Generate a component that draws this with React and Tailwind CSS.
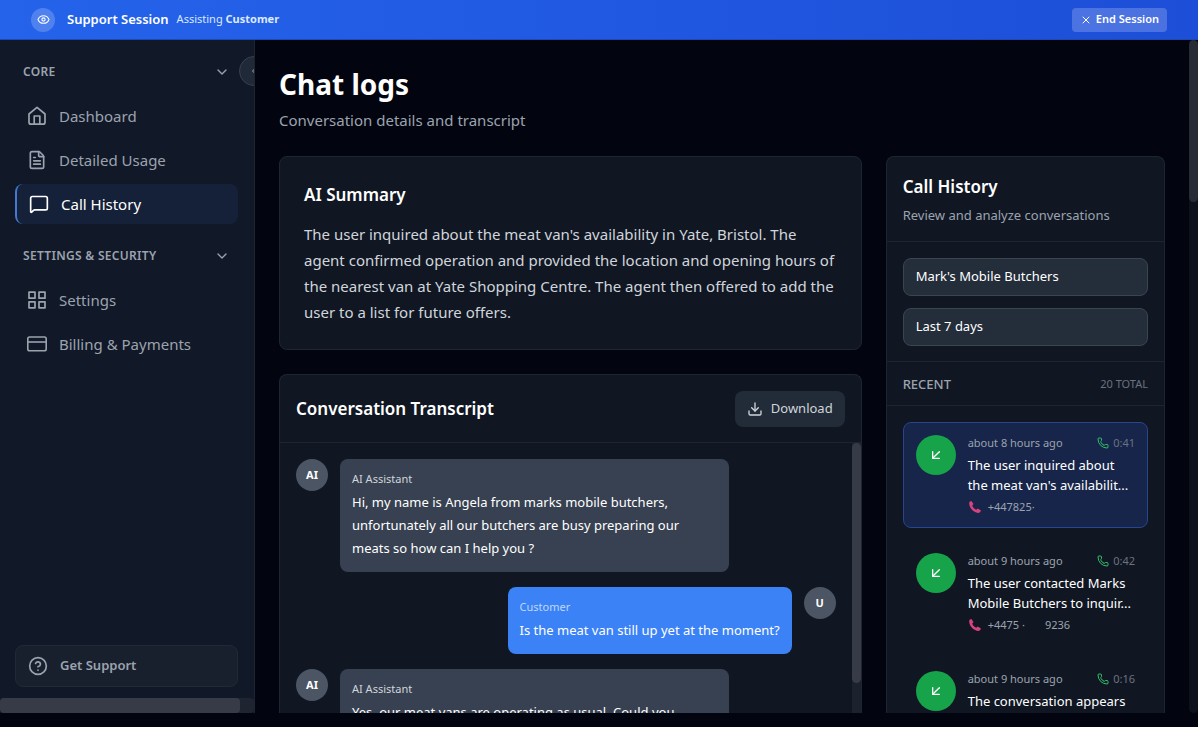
import React, { useState } from 'react';
import {
  ArrowDownLeft,
  ChevronDown,
  ChevronLeft,
  CircleHelp,
  Download,
  Eye,
  FileText,
  MessageSquare,
  Phone,
  X,
} from 'lucide-react';

function HomeIcon() {
  return (
    <svg className="size-5 shrink-0" viewBox="0 0 20 20" fill="none" stroke="currentColor" strokeWidth="1.7" strokeLinejoin="round" aria-hidden="true">
      <path d="M2 8 10 1.4 18 8v8.2a2 2 0 0 1-2 2H4a2 2 0 0 1-2-2Z" />
      <path d="M7.2 18.2V10h5.6v8.2" />
    </svg>
  );
}

function GridIcon() {
  return (
    <svg className="size-5 shrink-0" viewBox="0 0 20 20" fill="none" stroke="currentColor" strokeWidth="1.7" strokeLinejoin="round" aria-hidden="true">
      <path d="M2 2.2h6v6H2zM12 2.2h6v6h-6zM2 11.8h6v6H2zM12 11.8h6v6h-6z" />
    </svg>
  );
}

function CardIcon() {
  return (
    <svg className="size-5 shrink-0" viewBox="0 0 20 20" fill="none" stroke="currentColor" strokeWidth="1.6" aria-hidden="true">
      <rect x="0.8" y="3" width="18.4" height="13.8" rx="1.8" />
      <path d="M1 8h18" />
    </svg>
  );
}

const sections = [
  {
    title: 'CORE',
    items: [
      { name: 'Dashboard', icon: <HomeIcon /> },
      { name: 'Detailed Usage', icon: <FileText size={20} /> },
      { name: 'Call History', icon: <MessageSquare size={20} />, active: true },
    ],
  },
  {
    title: 'SETTINGS & SECURITY',
    items: [
      { name: 'Settings', icon: <GridIcon /> },
      { name: 'Billing & Payments', icon: <CardIcon /> },
    ],
  },
];

const messages = [
  {
    from: 'ai',
    text: 'Hi, my name is Angela from marks mobile butchers,\nunfortunately all our butchers are busy preparing our\nmeats so how can I help you ?',
  },
  { from: 'user', text: 'Is the meat van still up yet at the moment?' },
  { from: 'ai', text: 'Yes, our meat vans are operating as usual. Could you' },
];

const calls = [
  { id: 1, when: 'about 8 hours ago', length: '0:41', text: "The user inquired about\nthe meat van's availabilit...", phone: ['+447825·'] },
  { id: 2, when: 'about 9 hours ago', length: '0:42', text: 'The user contacted Marks\nMobile Butchers to inquir...', phone: ['+4475 ·', '9236'] },
  { id: 3, when: 'about 9 hours ago', length: '0:16', text: 'The conversation appears' },
];

function TopBar() {
  return (
    <header className="flex h-10 shrink-0 items-center justify-between border-b border-[#1e47b8] bg-linear-to-r from-[#2563eb] to-[#1d4ed8] px-[31px]">
      <div className="flex items-center">
        <span className="flex size-6 items-center justify-center rounded-full bg-white/20 text-white">
          <Eye size={13} />
        </span>
        <span className="ml-3 text-[13px] font-semibold text-white">Support Session</span>
        <span className="ml-2 text-[11px] text-blue-100">
          Assisting <b className="font-bold">Customer</b>
        </span>
      </div>
      <button className="flex h-6 items-center gap-1 rounded bg-white/20 px-2 text-[11px] font-semibold text-white">
        <X size={12} />
        End Session
      </button>
    </header>
  );
}

function Sidebar() {
  return (
    <aside className="relative flex w-[255px] shrink-0 flex-col overflow-hidden border-r border-[#1e2532] bg-[#111827]">
      <button
        aria-label="Collapse sidebar"
        className="absolute top-4 left-[239px] flex size-[30px] items-center justify-center rounded-full border border-[#374151] bg-[#1f2937] text-[#9ca3af]"
      >
        <ChevronLeft size={12} />
      </button>
      <nav className="flex flex-1 flex-col gap-4 pt-4 pr-4 pl-[15px]">
        {sections.map((section) => (
          <div key={section.title}>
            <button className="flex h-8 w-full items-center justify-between px-2 text-xs font-semibold tracking-wide text-[#9ca3af]">
              {section.title}
              <ChevronDown size={16} />
            </button>
            <ul className="mt-2 flex flex-col gap-1">
              {section.items.map((item) => (
                <li key={item.name}>
                  <a
                    href="#"
                    className={
                      item.active
                        ? 'flex h-10 items-center gap-3 rounded-lg border-l-2 border-[#4379d3] bg-[#152138] px-3 text-[15px] text-white'
                        : 'flex h-10 items-center gap-3 rounded-lg px-3 text-[15px] text-[#9ca3af]'
                    }
                  >
                    {item.icon}
                    {item.name}
                  </a>
                </li>
              ))}
            </ul>
          </div>
        ))}
      </nav>
      <div className="pr-4 pb-[11px] pl-[15px]">
        <button className="flex h-[42px] w-full items-center gap-3 rounded-lg border border-[#1f2937] bg-[#18202e] px-3 text-[13px] font-semibold text-[#9ca3af]">
          <CircleHelp size={20} />
          Get Support
        </button>
      </div>
      <div className="h-[15px] rounded bg-[#1e2430]">
        <div className="h-full w-60 rounded bg-[#363b47]" />
      </div>
    </aside>
  );
}

function Summary() {
  return (
    <section className="shrink-0 rounded-lg border border-[#1e2532] bg-[#101723] p-6">
      <h2 className="mb-3 text-[17px] leading-7 font-semibold text-white">AI Summary</h2>
      <p className="text-[15px] leading-[26px] text-[#d1d5db]">
        The user inquired about the meat van's availability in Yate, Bristol. The agent confirmed operation and provided the
        location and opening hours of the nearest van at Yate Shopping Centre. The agent then offered to add the user to a
        list for future offers.
      </p>
    </section>
  );
}

function Message({ from, text }) {
  const isUser = from === 'user';

  return (
    <div className={isUser ? 'flex flex-row-reverse gap-3' : 'flex gap-3'}>
      <span className="flex size-8 shrink-0 items-center justify-center rounded-full bg-[#4b5563] text-[11px] font-bold text-white">
        {isUser ? 'U' : 'AI'}
      </span>
      <div className={isUser ? 'rounded-lg bg-[#3b82f6] p-3' : 'w-[72%] rounded-lg bg-[#374151] p-3'}>
        <div className={isUser ? 'mb-1 text-[11px] leading-4 text-[#bfd7fd]' : 'mb-1 text-[11px] leading-4 text-[#d1d5db]'}>
          {isUser ? 'Customer' : 'AI Assistant'}
        </div>
        <p className="text-[13px] leading-[23px] whitespace-pre-line text-white">{text}</p>
      </div>
    </div>
  );
}

function Transcript() {
  return (
    <section className="flex min-h-0 flex-1 flex-col rounded-t-lg border border-b-0 border-[#1e2532] bg-[#101723]">
      <div className="flex items-center justify-between border-b border-[#1e2532] p-4 pb-[15px]">
        <h2 className="text-[17px] leading-7 font-semibold text-white">Conversation Transcript</h2>
        <button className="flex h-9 items-center gap-2 rounded-lg bg-[#222b38] px-3 text-[13px] text-[#d1d5db]">
          <Download size={16} />
          Download
        </button>
      </div>
      <div className="flex min-h-0 flex-1">
        <div className="flex flex-1 flex-col gap-[15px] overflow-hidden p-4">
          {messages.map((message, i) => (
            <Message key={i} from={message.from} text={message.text} />
          ))}
        </div>
        <div className="w-[9px] bg-[#1c222d]">
          <div className="h-[89%] rounded-full bg-[#363b47]" />
        </div>
      </div>
    </section>
  );
}

function CallItem({ call, selected, onSelect }) {
  return (
    <button
      onClick={onSelect}
      className={
        selected
          ? 'flex w-full gap-3 rounded-lg border border-[#24478f] bg-[#162549] p-3 text-left'
          : 'flex w-full gap-3 rounded-lg border border-transparent p-3 text-left'
      }
    >
      <span className="flex size-10 shrink-0 items-center justify-center rounded-full bg-[#16a34a] text-white">
        <ArrowDownLeft size={16} />
      </span>
      <span className="flex min-w-0 flex-1 flex-col gap-1">
        <span className="flex items-center justify-between text-[11px] leading-4 text-[#9ca3af]">
          {call.when}
          <span className="flex items-center gap-1 text-[#6b7280]">
            <Phone size={12} className="text-[#34c06c]" />
            {call.length}
          </span>
        </span>
        <span className="text-[13px] leading-5 whitespace-pre text-white">{call.text}</span>
        {call.phone && (
          <span className="flex items-center gap-[6px] text-[11px] leading-4 text-[#9ca3af]">
            <svg className="mx-[1px] size-3" viewBox="0 0 12 12" aria-hidden="true">
              <path
                d="M0.6 0.7 2.4 0.1 4.5 3.1 3.2 4.7C4 6.5 5.6 8 7.2 8.8L8.8 7.6 11.9 9.6C11.6 11 10.5 12 8.8 11.9 4.5 11.4 0.5 7.3 0.2 2.8 0.1 2 0.2 1.2 0.6 0.7Z"
                fill="#d9417f"
              />
            </svg>
            <span className="flex gap-5">
              {call.phone.map((part) => (
                <span key={part}>{part}</span>
              ))}
            </span>
          </span>
        )}
      </span>
    </button>
  );
}

function CallHistory() {
  const [selectedId, setSelectedId] = useState(1);

  return (
    <section className="flex min-h-0 flex-col overflow-hidden rounded-t-lg border border-b-0 border-[#1e2532] bg-[#101723]">
      <div className="border-b border-[#1e2532] p-4">
        <h2 className="text-[17px] leading-7 font-semibold text-white">Call History</h2>
        <p className="mt-1 text-[13px] leading-5 text-[#9ca3af]">Review and analyze conversations</p>
      </div>
      <div className="flex flex-col gap-3 border-b border-[#1e2532] p-4 pb-[15px]">
        <select aria-label="Business" className="h-[38px] w-full appearance-none rounded-lg border border-[#3b4451] bg-[#242d3a] px-3 text-[13px] text-white">
          <option>Mark's Mobile Butchers</option>
        </select>
        <select aria-label="Period" className="h-[38px] w-full appearance-none rounded-lg border border-[#3b4451] bg-[#242d3a] px-3 text-[13px] text-white">
          <option>Last 7 days</option>
        </select>
      </div>
      <div className="flex items-center justify-between border-b border-[#1e2532] px-4 pt-3 pb-[11px]">
        <h3 className="text-[13px] leading-5 font-medium text-[#9ca3af]">RECENT</h3>
        <span className="text-[11px] text-[#6b7280]">20 TOTAL</span>
      </div>
      <div className="flex flex-col gap-3 p-4">
        {calls.map((call) => (
          <CallItem key={call.id} call={call} selected={call.id === selectedId} onSelect={() => setSelectedId(call.id)} />
        ))}
      </div>
    </section>
  );
}

function App() {
  return (
    <div className="h-screen bg-white pb-2 font-['Noto_Sans','Open_Sans',sans-serif]">
      <div className="flex h-full flex-col overflow-hidden bg-[#02050f] pb-[14px]">
        <TopBar />
        <div className="flex min-h-0 flex-1">
          <Sidebar />
          <main className="flex min-w-0 flex-1 flex-col overflow-hidden px-6 pt-6">
            <h1 className="text-[28px] leading-10 font-bold text-white">Chat logs</h1>
            <p className="mt-1 mb-6 text-[15px] leading-6 text-[#9ca3af]">Conversation details and transcript</p>
            <div className="grid min-h-0 flex-1 grid-cols-3 grid-rows-[minmax(0,1fr)] gap-6">
              <div className="col-span-2 flex min-h-0 flex-col gap-6">
                <Summary />
                <Transcript />
              </div>
              <CallHistory />
            </div>
          </main>
          <div className="w-[9px] rounded-full bg-[#0d111b]">
            <div className="h-[162px] rounded-full bg-[#272b35]" />
          </div>
        </div>
      </div>
    </div>
  );
}

export default App;
